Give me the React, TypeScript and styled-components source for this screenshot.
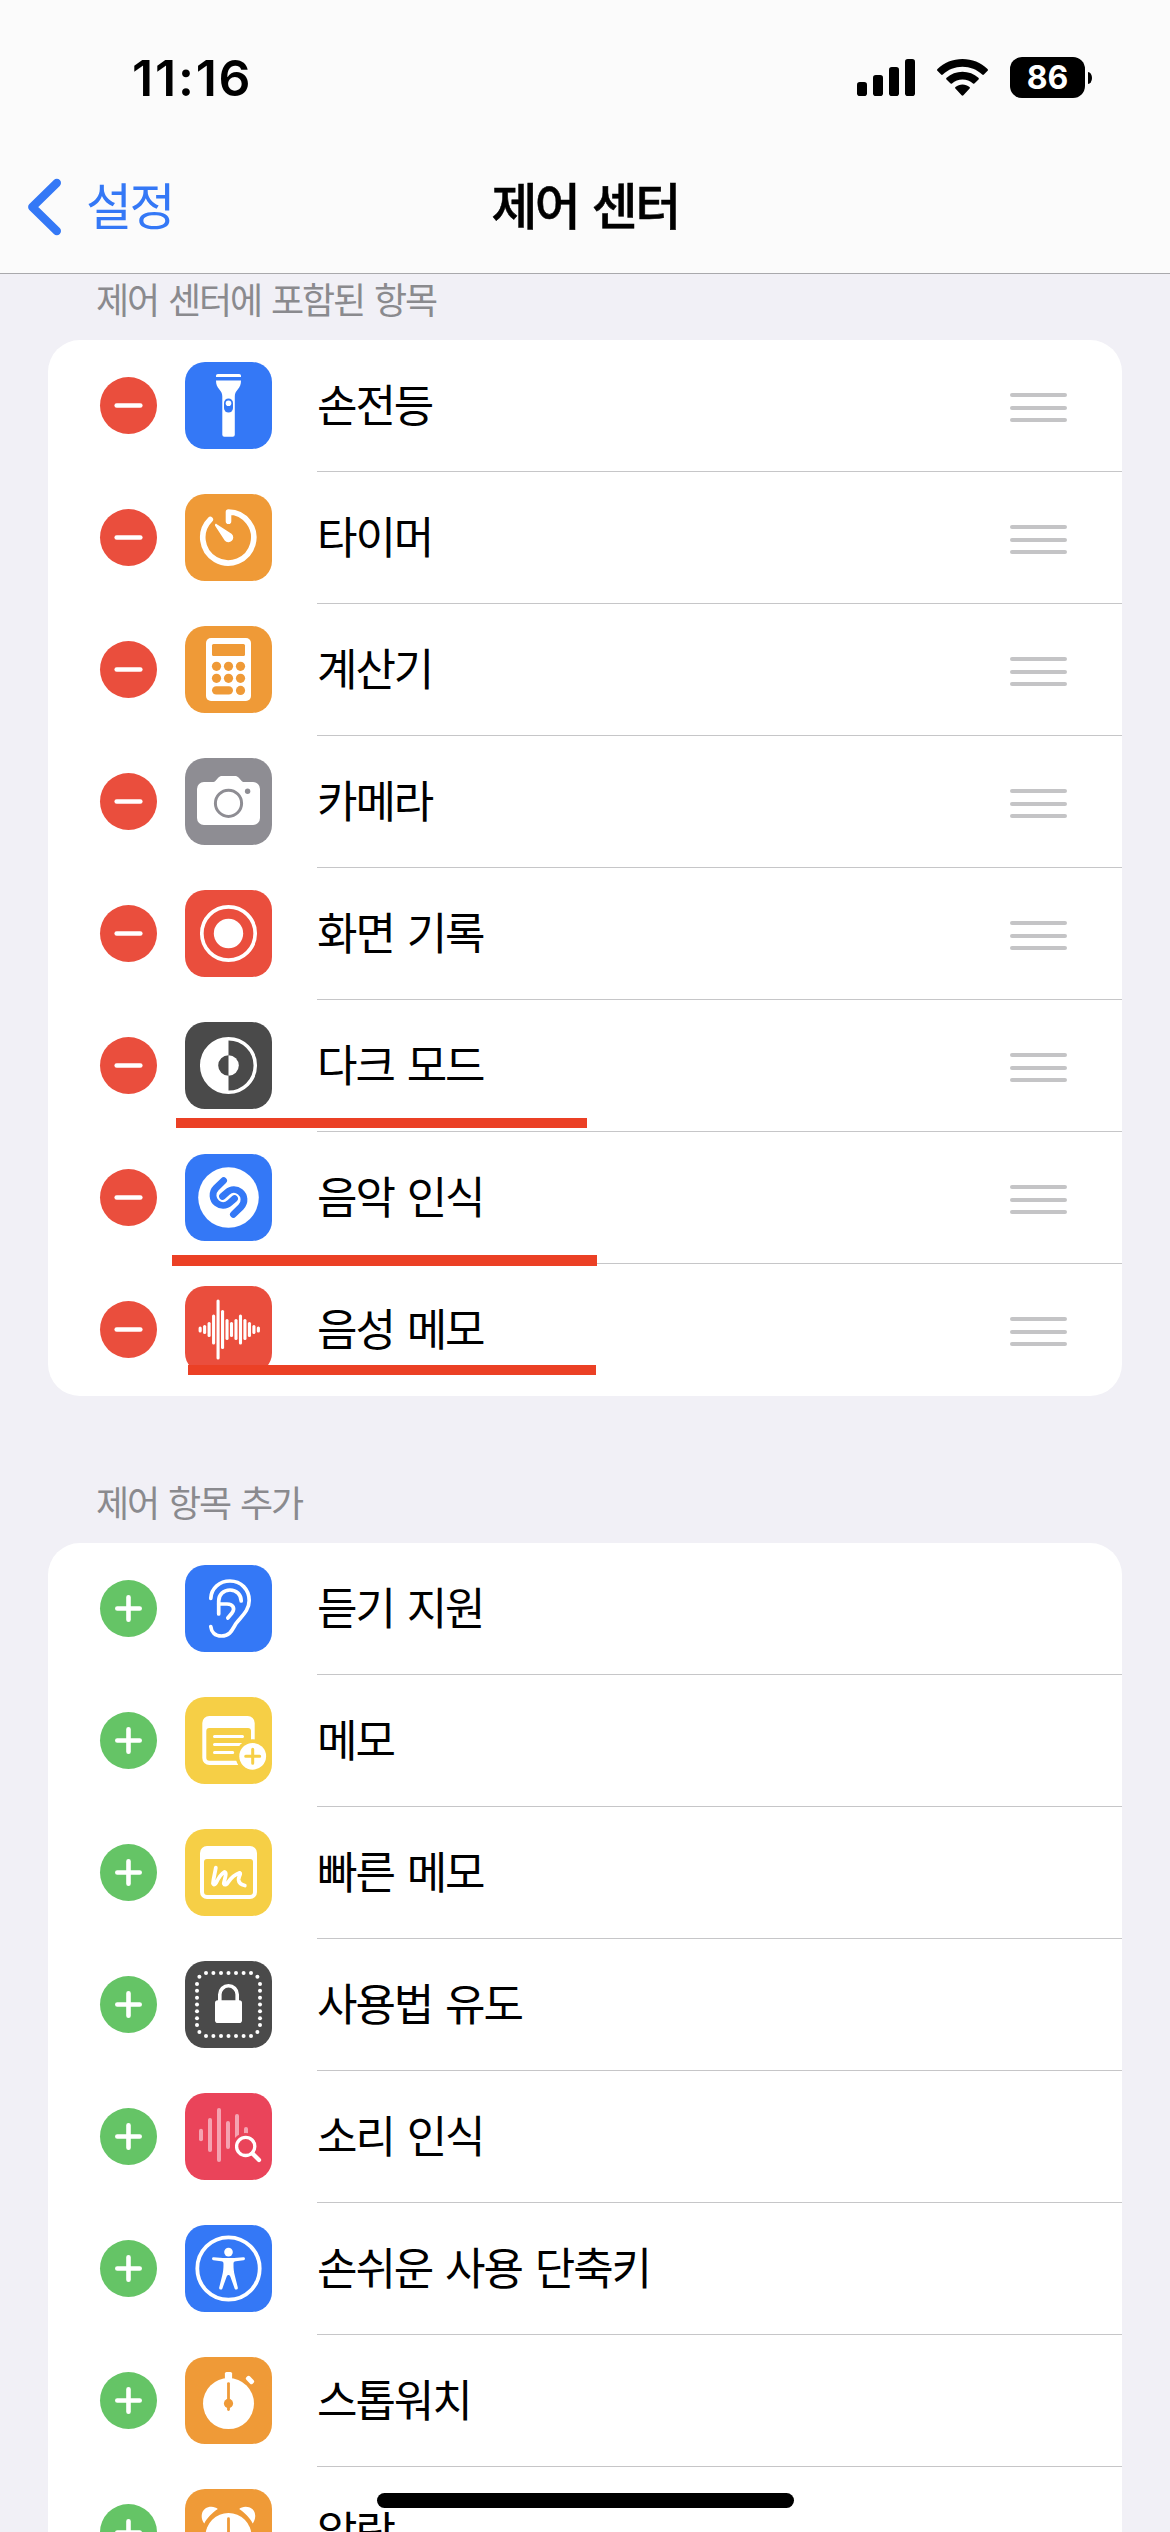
import React from "react";
import styled, { createGlobalStyle } from "styled-components";

const BLUE = "#3478f6";
const ORANGE = "#ef9a37";
const RED = "#ea4e3d";
const DARK = "#4a4a4a";
const YELLOW = "#f6cf46";
const PINK = "#ea445a";
const GRAY = "#8e8d93";
const GREEN = "#65c466";

const GlobalStyle = createGlobalStyle`
  * { box-sizing: border-box; }
  body {
    margin: 0;
    background: #f1f0f6;
    font-family: "Noto Sans CJK KR", sans-serif;
  }
`;

const Screen = styled.div`
  position: relative;
  width: 1170px;
  height: 2532px;
  overflow: hidden;
  background: #f1f0f6;
  display: flex;
  flex-direction: column;
`;

const Header = styled.header`
  flex: none;
  height: 274px;
  background: #fbfbfb;
  border-bottom: 1px solid #a9a9ac;
`;

const StatusBar = styled.div`
  height: 141px;
  padding: 14px 78px 0 132px;
  display: flex;
  align-items: center;
  justify-content: space-between;
`;

const Time = styled.div`
  font: 600 50px/60px Inter, sans-serif;
  letter-spacing: 1.8px;
  color: #000;
`;

const StatusIcons = styled.div`
  display: flex;
  align-items: center;
  gap: 22px;
`;

const Battery = styled.div`
  display: flex;
  align-items: center;
  gap: 3px;
`;

const BatteryBody = styled.div`
  width: 75px;
  height: 41px;
  border-radius: 12px;
  background: #000;
  color: #fff;
  display: flex;
  align-items: center;
  justify-content: center;
  font: 700 32px/41px Inter, sans-serif;
`;

const BatteryTip = styled.div`
  width: 4px;
  height: 12px;
  border-radius: 0 4px 4px 0 / 0 6px 6px 0;
  background: #000;
`;

const NavBar = styled.nav`
  height: 132px;
  padding: 0 26px;
  display: grid;
  grid-template-columns: 1fr auto 1fr;
  align-items: center;
`;

const Back = styled.div`
  display: flex;
  align-items: center;
  gap: 23px;
  color: ${BLUE};
`;

const BackLabel = styled.span`
  padding-bottom: 8px;
  font-size: 50px;
  line-height: 70px;
  letter-spacing: -2.4px;
`;

const Title = styled.h1`
  margin: 0;
  padding-bottom: 8px;
  font-size: 50px;
  line-height: 70px;
  font-weight: 500;
  letter-spacing: -2.6px;
  word-spacing: 5px;
  color: #000;
  -webkit-text-stroke: 0.5px #000;
`;

const SectionLabel = styled.h2<{ $height: number }>`
  flex: none;
  margin: 0;
  height: ${(p) => p.$height}px;
  padding: 0 96px 17px;
  display: flex;
  align-items: flex-end;
  font-size: 36px;
  line-height: 50px;
  font-weight: 400;
  letter-spacing: -2.1px;
  word-spacing: 4px;
  color: #8a8a8e;
`;

const Card = styled.ul`
  flex: none;
  list-style: none;
  margin: 0 48px;
  padding: 0;
  background: #fff;
  border-radius: 32px;
`;

const Row = styled.li`
  height: 132px;
  padding-left: 52px;
  display: flex;
  align-items: flex-start;
`;

const Toggle = styled.span<{ $color: string }>`
  flex: none;
  width: 57px;
  height: 57px;
  margin-top: 37px;
  border-radius: 50%;
  background: ${(p) => p.$color};
  display: flex;
`;

const AppIcon = styled.span<{ $color: string }>`
  flex: none;
  width: 87px;
  height: 87px;
  margin: 22px 45px 0 28px;
  border-radius: 20px;
  background: ${(p) => p.$color};
  display: flex;
  overflow: hidden;
`;

const RowBody = styled.span<{ $divided: boolean }>`
  flex: 1;
  height: 132px;
  border-bottom: 1px solid ${(p) => (p.$divided ? "#c6c6c8" : "transparent")};
  padding-right: 55px;
  display: flex;
  align-items: center;
  justify-content: space-between;
`;

const RowLabel = styled.span`
  padding-bottom: 5px;
  font-size: 44px;
  line-height: 64px;
  letter-spacing: -2.1px;
  word-spacing: 5.2px;
  color: #000;
`;

const Grip = styled.span`
  width: 57px;
  padding-top: 4px;
  display: flex;
  flex-direction: column;
  gap: 8.5px;
`;

const GripLine = styled.i`
  height: 4px;
  border-radius: 2px;
  background: #c4c4c6;
`;

const Underline = styled.div<{ $x: number; $y: number; $w: number; $h: number }>`
  position: absolute;
  left: ${(p) => p.$x}px;
  top: ${(p) => p.$y}px;
  width: ${(p) => p.$w}px;
  height: ${(p) => p.$h}px;
  background: #eb4025;
`;

const HomeIndicator = styled.div`
  position: absolute;
  left: 377px;
  top: 2493px;
  width: 417px;
  height: 15px;
  border-radius: 8px;
  background: #000;
`;

const Glyph = ({ children }: { children: React.ReactNode }) => (
  <svg width="87" height="87" viewBox="0 0 87 87" fill="#fff">
    {children}
  </svg>
);

const line = (width: number, color = "#fff") => ({
  fill: "none",
  stroke: color,
  strokeWidth: width,
  strokeLinecap: "round" as const,
  strokeLinejoin: "round" as const,
});

const Flashlight = () => (
  <Glyph>
    <path d="M31 15v-1.200a1.800 1.800 0 0 1 1.800-1.800h21.400a1.800 1.800 0 0 1 1.800 1.800V15z" />
    <path d="M31 18.600h25c0 4-1 6-3.300 9-2 2.600-2.900 4-2.900 7V72.700a2 2 0 0 1-2 2h-8.500a2 2 0 0 1-2-2V34.600c0-3-.9-4.400-2.900-7-2.300-3-3.400-5-3.400-9z" />
    <rect x="39" y="36.500" width="9" height="14" rx="4.500" fill={BLUE} />
    <circle cx="43.500" cy="41.300" r="2.800" />
  </Glyph>
);

const Timer = () => (
  <Glyph>
    <path d="M43.500 27.200V18A25.500 25.500 0 1 1 25.300 25.400" {...line(5.6)} />
    <path d="M30.200 30.200c.5-.5 1-.4 1.600 0l14.700 9.500a4.800 4.800 0 1 1-6.800 6.700l-9.600-14.700c-.3-.5-.3-1.100.1-1.500z" />
  </Glyph>
);

const Calculator = () => (
  <Glyph>
    <rect x="21" y="12" width="45" height="63" rx="5" />
    <rect x="27" y="18" width="33" height="12" rx="1.500" fill={ORANGE} />
    {[40.3, 52.3].map((y) =>
      [31.5, 43.5, 55.5].map((x) => <circle key={`${x}-${y}`} cx={x} cy={y} r="4.600" fill={ORANGE} />)
    )}
    <rect x="27" y="60.200" width="21" height="8.400" rx="4.200" fill={ORANGE} />
    <circle cx="55.500" cy="64.400" r="4.600" fill={ORANGE} />
  </Glyph>
);

const Camera = () => (
  <Glyph>
    <path d="M19 24h8.500c1.500 0 2.300-.4 3.300-1.500l2.400-2.700c1.200-1.300 2.200-1.800 4-1.800h12.600c1.800 0 2.800.5 4 1.800l2.400 2.700c1 1.100 1.800 1.500 3.300 1.500H68a7 7 0 0 1 7 7v29a7 7 0 0 1-7 7H19a7 7 0 0 1-7-7V31a7 7 0 0 1 7-7z" />
    <circle cx="43.500" cy="45.300" r="13.100" fill="none" stroke={GRAY} strokeWidth="3" />
    <circle cx="62.600" cy="33.300" r="2.700" fill={GRAY} />
  </Glyph>
);

const ScreenRecord = () => (
  <Glyph>
    <circle cx="43.500" cy="43.500" r="26.700" {...line(3.7)} />
    <circle cx="43.500" cy="43.500" r="14.700" />
  </Glyph>
);

const DarkMode = () => (
  <Glyph>
    <circle cx="43.500" cy="43.500" r="26.800" {...line(3.5)} />
    <path d="M43.500 16v17.200a10.300 10.300 0 0 0 0 20.600V71a27.500 27.500 0 0 1 0-55z" />
    <path d="M43.500 33.200a10.300 10.300 0 0 1 0 20.600z" />
  </Glyph>
);

const hook = "M38.600 26.600L31 34C26.500 38.500 27.300 45.600 31.800 49.200C35.600 52.300 41 52.200 44.800 48.800L49.500 44.600";

const MusicRecognition = () => (
  <Glyph>
    <circle cx="43.500" cy="43.500" r="30.300" />
    <path d={hook} {...line(6.8, BLUE)} />
    <path d={hook} transform="rotate(180 43.500 43.500)" {...line(6.8, BLUE)} />
  </Glyph>
);

const voiceBars = [6, 9, 15, 30, 60, 39, 21, 15, 21, 30, 21, 15, 9, 6];

const VoiceMemo = () => (
  <Glyph>
    {voiceBars.map((h, i) => (
      <rect key={i} x={13.6 + i * 4.48} y={43.5 - h / 2} width="3.100" height={h} rx="1.500" />
    ))}
  </Glyph>
);

const Hearing = () => (
  <Glyph>
    <path
      d="M25.800 33.300C26.300 23.500 34.500 16 45 16C56 16 64.200 24.500 64.200 35.500C64.200 46 56 51.500 51 58.500C47.500 64 45.500 71 36.500 71C30 71 26.300 67 25.800 61.700"
      {...line(3.7)}
    />
    <path d="M33.700 49V36C33.700 29.500 38.500 25 45 25C51.500 25 56.200 29.500 56.200 36" {...line(3.7)} />
    <path d="M33.700 39H42C48.500 39 50.200 43.500 47 48L42.800 53" {...line(3.7)} />
  </Glyph>
);

const Notes = () => (
  <Glyph>
    <rect x="17.300" y="19" width="52.400" height="49" rx="7" />
    <rect x="21.300" y="31" width="44.700" height="32.700" rx="3" fill={YELLOW} />
    <path d="M29.500 39.400H57.500M29.500 47.400H57.500M29.500 55.400H47.700" {...line(3)} />
    <circle cx="67.700" cy="59.300" r="17" fill={YELLOW} />
    <circle cx="67.700" cy="59.300" r="13.400" />
    <path d="M60.700 59.300H74.700M67.700 52.300V66.300" {...line(3, YELLOW)} />
  </Glyph>
);

const QuickNote = () => (
  <Glyph>
    <rect x="15" y="17" width="57" height="53" rx="7" />
    <rect x="19" y="30" width="49" height="36" rx="3" fill={YELLOW} />
    <path
      d="M30.800 38.700C30 44 28.500 48.500 28 54.500C29 56.500 30.500 55 31.200 53.600C33.500 49 36 45 39.300 43C42.500 43 39.500 50 38.800 54.500C40 56.800 42 55 43 53.400C46 49 50 45.500 54.700 43.800C56.500 44.500 53.300 47.500 53.600 51C54 54.500 56.800 55.800 59.800 56.500"
      {...line(3.8)}
    />
  </Glyph>
);

const across = [21, 28.4, 36, 43.5, 51, 58.6, 66];
const down = [23, 29.8, 36.7, 43.5, 50.3, 57.2, 64];

const GuidedAccess = () => (
  <Glyph>
    {across.map((x) => [12, 75].map((y) => <circle key={`h${x}-${y}`} cx={x} cy={y} r="2" />))}
    {down.map((y) => [12, 75].map((x) => <circle key={`v${x}-${y}`} cx={x} cy={y} r="2" />))}
    {[14.4, 72.4].map((x) => [15.8, 71].map((y) => <circle key={`c${x}-${y}`} cx={x} cy={y} r="2" />))}
    <rect x="30" y="39.300" width="27" height="22.700" rx="2.800" />
    <path d="M34.800 40.500V33.500a8.700 8.700 0 0 1 17.400 0V40.500" {...line(3.6)} />
  </Glyph>
);

const soundBars: [number, number, number][] = [
  [16, 35.7, 48.2],
  [25, 25, 59],
  [34, 15, 69],
  [43, 28, 56],
  [52, 21, 46],
  [61, 34, 42],
];

const SoundRecognition = () => (
  <Glyph>
    {soundBars.map(([x, top, bottom]) => (
      <rect key={x} x={x - 2} y={top} width="4" height={bottom - top} rx="2" fill="#f5a3b1" />
    ))}
    <circle cx="60.700" cy="53.400" r="13.500" fill={PINK} />
    <circle cx="60.700" cy="53.400" r="9.100" {...line(3.3)} />
    <path d="M67.500 60.500L74 67" {...line(4.3)} />
  </Glyph>
);

const Accessibility = () => (
  <Glyph>
    <circle cx="43.500" cy="43.500" r="31.200" {...line(3.8)} />
    <circle cx="43.500" cy="27.100" r="4.300" />
    <path d="M28.700 32.200l9.300.9h11l9.300-.9a1.500 1.500 0 0 1 .3 3l-7.700 1.100c-1.900.3-2.400.8-2.400 2.600 0 4.500.3 7.600 1.300 11.500l3 12.100c.5 2.100-2.500 2.900-3.200.9l-4.200-11.700c-.8-2.200-3-2.200-3.800 0l-4.200 11.700c-.7 2-3.700 1.200-3.200-.9l3-12.100c1-3.900 1.300-7 1.300-11.500 0-1.800-.5-2.300-2.400-2.600l-7.700-1.100a1.500 1.500 0 0 1 .3-3z" />
  </Glyph>
);

const Stopwatch = () => (
  <Glyph>
    <circle cx="43.500" cy="46.600" r="25.500" />
    <rect x="39.900" y="15" width="7.200" height="9" rx="1.600" />
    <rect x="60.500" y="20.500" width="9" height="5" rx="1.800" transform="rotate(45 65 23)" />
    <path d="M43.500 26.600V52.600" {...line(2.8, ORANGE)} />
    <circle cx="43.500" cy="46.400" r="4.600" fill={ORANGE} />
  </Glyph>
);

const Alarm = () => (
  <Glyph>
    <circle cx="43.500" cy="47" r="23" />
    <path d="M19.300 34.400C14.500 28.500 16.200 17.800 26.500 17.800C29 17.800 31.300 18.800 32.800 20C28 23 22 29 19.300 34.400z" />
    <path d="M67.700 34.400C72.500 28.500 70.800 17.800 60.500 17.800C58 17.800 55.700 18.800 54.200 20C59 23 65 29 67.700 34.400z" />
    <path d="M43.500 29.700V47" {...line(2.8, ORANGE)} />
  </Glyph>
);

type Control = { name: string; color: string; Icon: React.ComponentType };

const included: Control[] = [
  { name: "손전등", color: BLUE, Icon: Flashlight },
  { name: "타이머", color: ORANGE, Icon: Timer },
  { name: "계산기", color: ORANGE, Icon: Calculator },
  { name: "카메라", color: GRAY, Icon: Camera },
  { name: "화면 기록", color: RED, Icon: ScreenRecord },
  { name: "다크 모드", color: DARK, Icon: DarkMode },
  { name: "음악 인식", color: BLUE, Icon: MusicRecognition },
  { name: "음성 메모", color: RED, Icon: VoiceMemo },
];

const more: Control[] = [
  { name: "듣기 지원", color: BLUE, Icon: Hearing },
  { name: "메모", color: YELLOW, Icon: Notes },
  { name: "빠른 메모", color: YELLOW, Icon: QuickNote },
  { name: "사용법 유도", color: DARK, Icon: GuidedAccess },
  { name: "소리 인식", color: PINK, Icon: SoundRecognition },
  { name: "손쉬운 사용 단축키", color: BLUE, Icon: Accessibility },
  { name: "스톱워치", color: ORANGE, Icon: Stopwatch },
  { name: "알람", color: ORANGE, Icon: Alarm },
];

const ControlList = ({ items, removable }: { items: Control[]; removable?: boolean }) => (
  <Card>
    {items.map(({ name, color, Icon }, i) => (
      <Row key={name}>
        <Toggle $color={removable ? RED : GREEN}>
          <svg width="57" height="57" viewBox="0 0 57 57">
            <path d={removable ? "M16.700 28.500H40.300" : "M17.300 28.500H39.700M28.500 17.300V39.700"} {...line(4.6)} />
          </svg>
        </Toggle>
        <AppIcon $color={color}>
          <Icon />
        </AppIcon>
        <RowBody $divided={i < items.length - 1}>
          <RowLabel>{name}</RowLabel>
          {removable && (
            <Grip>
              <GripLine />
              <GripLine />
              <GripLine />
            </Grip>
          )}
        </RowBody>
      </Row>
    ))}
  </Card>
);

export default function App() {
  return (
    <Screen>
      <GlobalStyle />
      <Header>
        <StatusBar>
          <Time>11:16</Time>
          <StatusIcons>
            <svg width="58" height="38" viewBox="0 0 58 38">
              <rect x="0" y="23" width="10" height="14" rx="2.800" />
              <rect x="16" y="16" width="10" height="21" rx="2.800" />
              <rect x="32" y="8" width="10" height="29" rx="2.800" />
              <rect x="48" y="0" width="10" height="37" rx="2.800" />
            </svg>
            <svg width="51" height="38" viewBox="0 0 51 38">
              <path d="M25.500 0C16 0 7 3.700.5 9.900c-.6.600-.6 1.300-.1 1.800l3.700 3.800c.5.500 1.200.5 1.700 0C11.200 10.600 18 7.800 25.500 7.800s14.300 2.800 19.700 7.700c.5.500 1.200.5 1.700 0l3.700-3.800c.5-.5.500-1.200-.1-1.800C44 3.700 35 0 25.500 0z" />
              <path d="M25.500 12.700c-6 0-11.600 2.200-15.900 6-.6.500-.6 1.300-.1 1.800l3.800 3.800c.5.500 1.100.5 1.700.1 2.900-2.400 6.500-3.800 10.500-3.800s7.600 1.400 10.500 3.800c.6.400 1.200.4 1.700-.1l3.800-3.800c.5-.5.500-1.300-.1-1.800-4.300-3.800-9.900-6-15.900-6z" />
              <path d="M25.500 25.400c-2.600 0-5 .9-7 2.500-.6.500-.6 1.200-.1 1.700l6.200 6.600c.5.600 1.300.6 1.800 0l6.200-6.600c.5-.5.500-1.200-.1-1.700-2-1.600-4.400-2.500-7-2.500z" />
            </svg>
            <Battery>
              <BatteryBody>86</BatteryBody>
              <BatteryTip />
            </Battery>
          </StatusIcons>
        </StatusBar>
        <NavBar>
          <Back>
            <svg width="37" height="60" viewBox="0 0 37 60">
              <path d="M30.800 6L6.300 30L30.800 54" {...line(8.4, BLUE)} />
            </svg>
            <BackLabel>설정</BackLabel>
          </Back>
          <Title>제어 센터</Title>
        </NavBar>
      </Header>
      <SectionLabel $height={66}>제어 센터에 포함된 항목</SectionLabel>
      <ControlList items={included} removable />
      <SectionLabel $height={147}>제어 항목 추가</SectionLabel>
      <ControlList items={more} />
      <Underline $x={176} $y={1118} $w={411} $h={10} />
      <Underline $x={172} $y={1255} $w={425} $h={11} />
      <Underline $x={188} $y={1365} $w={408} $h={10} />
      <HomeIndicator />
    </Screen>
  );
}
